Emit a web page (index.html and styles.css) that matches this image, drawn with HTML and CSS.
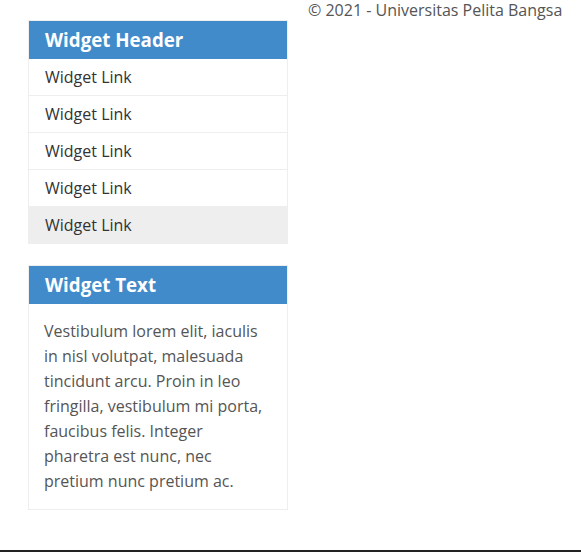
FILE: index.html
```html
<!DOCTYPE html>
<html lang="en">
<head>
<meta charset="utf-8">
<title>Widgets</title>
<link rel="stylesheet" href="styles.css">
</head>
<body>
<div class="page">
  <div class="columns">
    <aside class="sidebar">
      <div class="widget">
        <h3 class="widget-title">Widget Header</h3>
        <ul class="widget-links">
          <li><a href="#">Widget Link</a></li>
          <li><a href="#">Widget Link</a></li>
          <li><a href="#">Widget Link</a></li>
          <li><a href="#">Widget Link</a></li>
          <li class="active"><a href="#">Widget Link</a></li>
        </ul>
      </div>
      <div class="widget">
        <h3 class="widget-title">Widget Text</h3>
        <p class="widget-text">Vestibulum lorem elit, iaculis in nisl volutpat, malesuada tincidunt arcu. Proin in leo fringilla, vestibulum mi porta, faucibus felis. Integer pharetra est nunc, nec pretium nunc pretium ac.</p>
      </div>
    </aside>
    <div class="content">
      <p class="copyright">© 2021 - Universitas Pelita Bangsa</p>
    </div>
  </div>
  <footer class="footer"></footer>
</div>
</body>
</html>
```
FILE: styles.css
```css
html, body {
  margin: 0;
  padding: 0;
  background: #fff;
}
body {
  font-family: "Open Sans", "Liberation Sans", sans-serif;
  font-size: 16px;
  color: #555;
}
.columns {
  display: flex;
  align-items: flex-start;
  gap: 20px;
  padding: 0 0 40px 28px;
}
.sidebar {
  width: 260px;
  padding-top: 20px;
  display: flex;
  flex-direction: column;
  gap: 21px;
}
.widget {
  border: 1px solid #eee;
  background: #fff;
}
.widget-title {
  margin: 0;
  padding: 5px 16px;
  background: #428bca;
  color: #fff;
  font-size: 18.72px;
  font-weight: 700;
  line-height: 28px;
}
.widget-links {
  list-style: none;
  margin: 0;
  padding: 0;
}
.widget-links li {
  border-bottom: 1px solid #eee;
}
.widget-links li:last-child {
  border-bottom: 0;
}
.widget-links a {
  display: block;
  padding: 7px 16px;
  line-height: 22px;
  color: #333;
  text-decoration: none;
}
.widget-links li.active a {
  background: #eee;
}
.widget-text {
  margin: 0;
  padding: 15px 16px 15px 15px;
  line-height: 25px;
  color: #555;
}
.content {
  flex: 1;
}
.copyright {
  margin: 0;
  line-height: 20px;
  color: #555;
}
.footer {
  height: 40px;
  background: #222;
}
```
